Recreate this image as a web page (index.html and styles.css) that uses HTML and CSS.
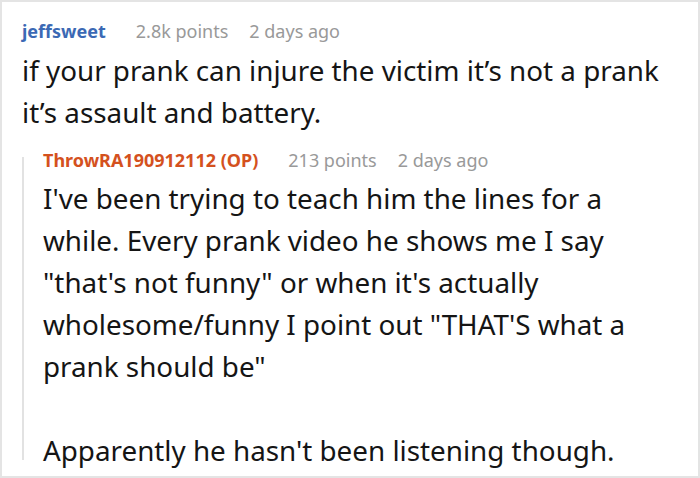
FILE: index.html
```html
<!DOCTYPE html>
<html>
<head>
<meta charset="utf-8">
<link rel="stylesheet" href="styles.css">
</head>
<body>
<div class="frame">
  <div class="comment">
    <div class="meta">
      <span class="author author-blue">jeffsweet</span>
      <span class="points">2.8k points</span>
      <span class="time">2 days ago</span>
    </div>
    <p class="text">if your prank can injure the victim it’s not a prank it’s assault and battery.</p>
  </div>
  <div class="reply">
    <div class="meta meta-reply">
      <span class="author author-orange">ThrowRA190912112 (OP)</span>
      <span class="points">213 points</span>
      <span class="time">2 days ago</span>
    </div>
    <p class="text text-reply">I've been trying to teach him the lines for a while. Every prank video he shows me I say "that's not funny" or when it's actually wholesome/funny I point out "THAT'S what a prank should be"</p>
    <p class="text text-reply text-last">Apparently he hasn't been listening though.</p>
  </div>
</div>
</body>
</html>
```

FILE: styles.css
```css
html, body {
  margin: 0;
  padding: 0;
  background: #ffffff;
}
body {
  width: 700px;
  height: 478px;
  overflow: hidden;
  font-family: "Noto Sans", "Open Sans", sans-serif;
}
.frame {
  box-sizing: border-box;
  width: 700px;
  height: 478px;
  border: 2px solid #e4e4e4;
  padding: 11px 20px 0 20px;
}
.meta {
  display: flex;
  align-items: baseline;
  font-size: 18px;
  line-height: 36px;
  color: #999999;
}
.author {
  font-weight: 700;
  margin-right: 30px;
}
.author-blue { color: #3b69b4; }
.author-orange { color: #d4511e; }
.points { margin-right: 21px; }
.text {
  margin: 0;
  font-size: 27.8px;
  line-height: 42px;
  color: #151515;
}
.reply {
  display: flex;
  flex-direction: column;
  margin-top: 24px;
  border-left: 2px solid #e2e2e2;
  padding-left: 19px;
}
.meta-reply {
  margin-top: -14px;
  line-height: 34px;
}
.text-reply {
  max-width: 592px;
}
.text-last {
  margin-top: 42px;
  margin-bottom: -11px;
}
```
